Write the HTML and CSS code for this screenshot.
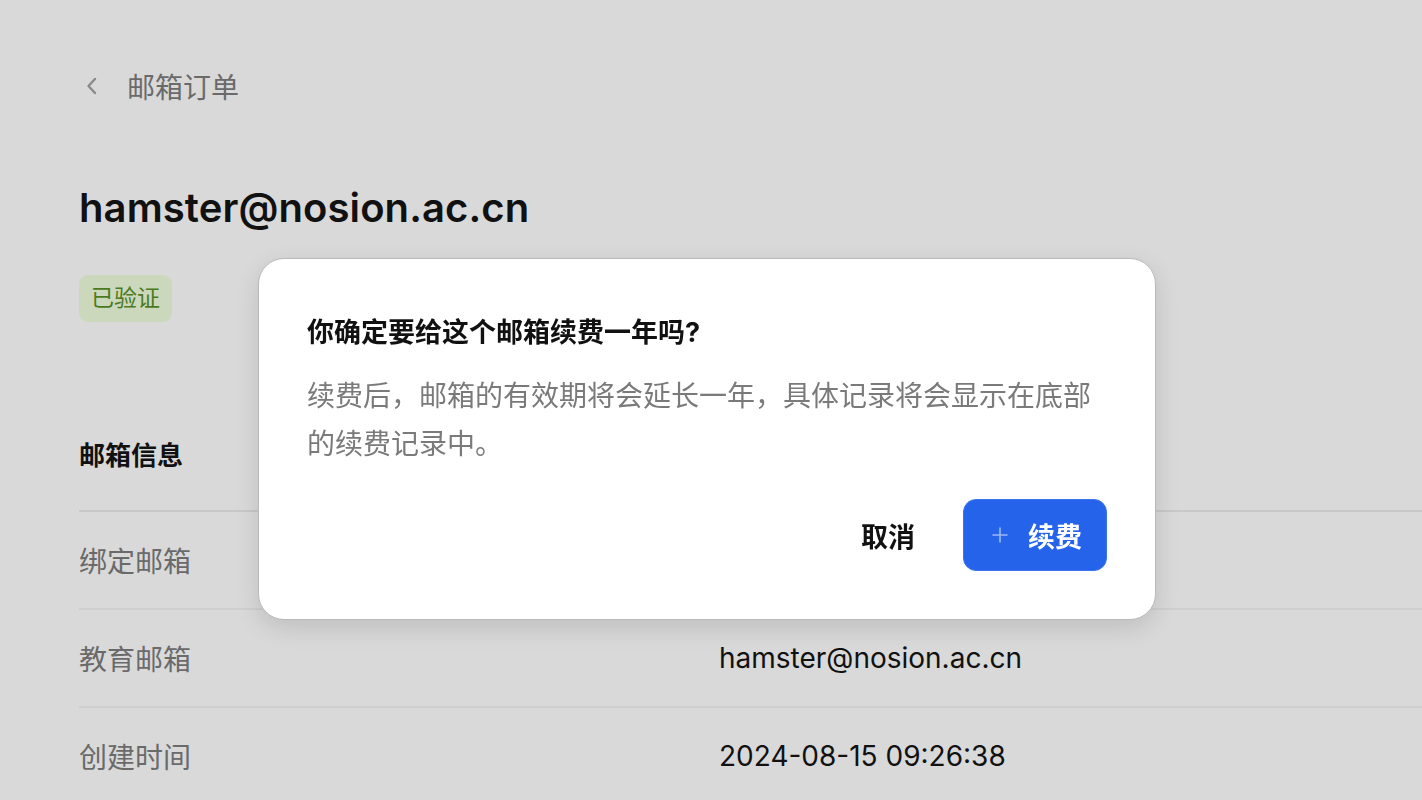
FILE: index.html
```html
<!DOCTYPE html>
<html lang="zh-CN">
<head>
    <meta charset="UTF-8">
    <meta name="viewport" content="width=device-width, initial-scale=1.0">
    <title>邮箱订单</title>
    <link rel="stylesheet" href="styles.css">
</head>
<body>
    <div class="page">
        <div class="topbar">
            <svg class="back" width="20" height="20" viewBox="0 0 20 20" fill="none">
                <path d="M13 3 L6.5 10 L13 17" stroke="currentColor" stroke-width="2.4" stroke-linecap="round" stroke-linejoin="round"/>
            </svg>
            <span class="topbar-title">邮箱订单</span>
        </div>

        <h1 class="address">hamster@nosion.ac.cn</h1>
        <span class="badge">已验证</span>

        <div class="section-title">邮箱信息</div>
        <div class="info">
            <div class="row">
                <div class="label">绑定邮箱</div>
                <div class="value"></div>
            </div>
            <div class="row">
                <div class="label">教育邮箱</div>
                <div class="value">hamster@nosion.ac.cn</div>
            </div>
            <div class="row">
                <div class="label">创建时间</div>
                <div class="value">2024-08-15 09:26:38</div>
            </div>
        </div>
    </div>

    <!-- dialog over the dimmed page -->
    <div class="overlay">
        <div class="dialog">
            <div class="dialog-title">你确定要给这个邮箱续费一年吗?</div>
            <p class="dialog-text">续费后，邮箱的有效期将会延长一年，具体记录将会显示在底部的续费记录中。</p>
            <div class="dialog-actions">
                <button class="btn-cancel">取消</button>
                <button class="btn-primary">
                    <svg width="20" height="20" viewBox="0 0 20 20" fill="none">
                        <path d="M10 3 V17 M3 10 H17" stroke="currentColor" stroke-width="1.6" stroke-linecap="round"/>
                    </svg>
                    <span>续费</span>
                </button>
            </div>
        </div>
    </div>
</body>
</html>
```

FILE: styles.css
```css
/* page */
body {
    margin: 0;
    background-color: #d9d9d9;
    font-family: Inter, "Noto Sans CJK SC", sans-serif;
    color: #111;
}

.page {
    padding: 64px 0 0 79px;
}

.topbar {
    display: flex;
    align-items: center;
    height: 44px;
    color: #6a6a6a;
}

.back {
    color: #8a8a8a;
    margin-left: 3px;
    margin-right: 25px;
}

.topbar-title {
    font-size: 28px;
}

.address {
    margin: 74px 0 0 0;
    font-size: 40px;
    font-weight: 600;
    line-height: 52px;
    letter-spacing: 0.1px;
}

.badge {
    display: inline-block;
    margin-top: 41px;
    padding: 0 12px;
    height: 47px;
    line-height: 47px;
    border-radius: 9px;
    background-color: #cbd8bb;
    color: #4b7a20;
    font-size: 23px;
}

.section-title {
    margin-top: 106px;
    height: 56px;
    line-height: 56px;
    padding-bottom: 26px;
    font-size: 26px;
    font-weight: 700;
    border-bottom: 2px solid #c8c8c8;
}

.row {
    display: flex;
    align-items: center;
    height: 96px;
    border-bottom: 2px solid #cfcfcf;
    font-size: 28px;
}

.label {
    width: 640px;
    color: #6a6a6a;
}

.value {
    color: #111;
}

/* dialog */
.overlay {
    position: fixed;
    top: 0;
    left: 0;
    right: 0;
    bottom: 0;
    display: flex;
    justify-content: center;
    align-items: flex-start;
    padding-top: 258px;
    padding-right: 8px;
}

.dialog {
    width: 800px;
    padding: 50px 48px 48px 48px;
    background-color: #fff;
    border: 1px solid #b9b9b9;
    border-radius: 26px;
    box-shadow: 0 8px 24px rgba(0, 0, 0, 0.12);
}

.dialog-title {
    font-size: 27px;
    font-weight: 700;
    line-height: 48px;
    color: #111;
}

.dialog-text {
    margin: 15px 0 0 0;
    font-size: 28px;
    line-height: 48px;
    color: #7a7a7a;
}

.dialog-actions {
    display: flex;
    justify-content: flex-end;
    align-items: center;
    gap: 48px;
    margin-top: 31px;
}

.btn-cancel {
    border: none;
    background: none;
    padding: 0;
    font-family: inherit;
    font-size: 27px;
    font-weight: 700;
    color: #111;
    cursor: pointer;
}

.btn-primary {
    display: flex;
    align-items: center;
    gap: 18px;
    height: 72px;
    width: 144px;
    padding: 0 0 0 26px;
    border: 1px solid #3b74ee;
    border-radius: 13px;
    background-color: #2563eb;
    color: #fff;
    font-family: inherit;
    font-size: 27px;
    font-weight: 700;
    cursor: pointer;
}

.btn-primary svg {
    color: #9db8f5;
}
```
